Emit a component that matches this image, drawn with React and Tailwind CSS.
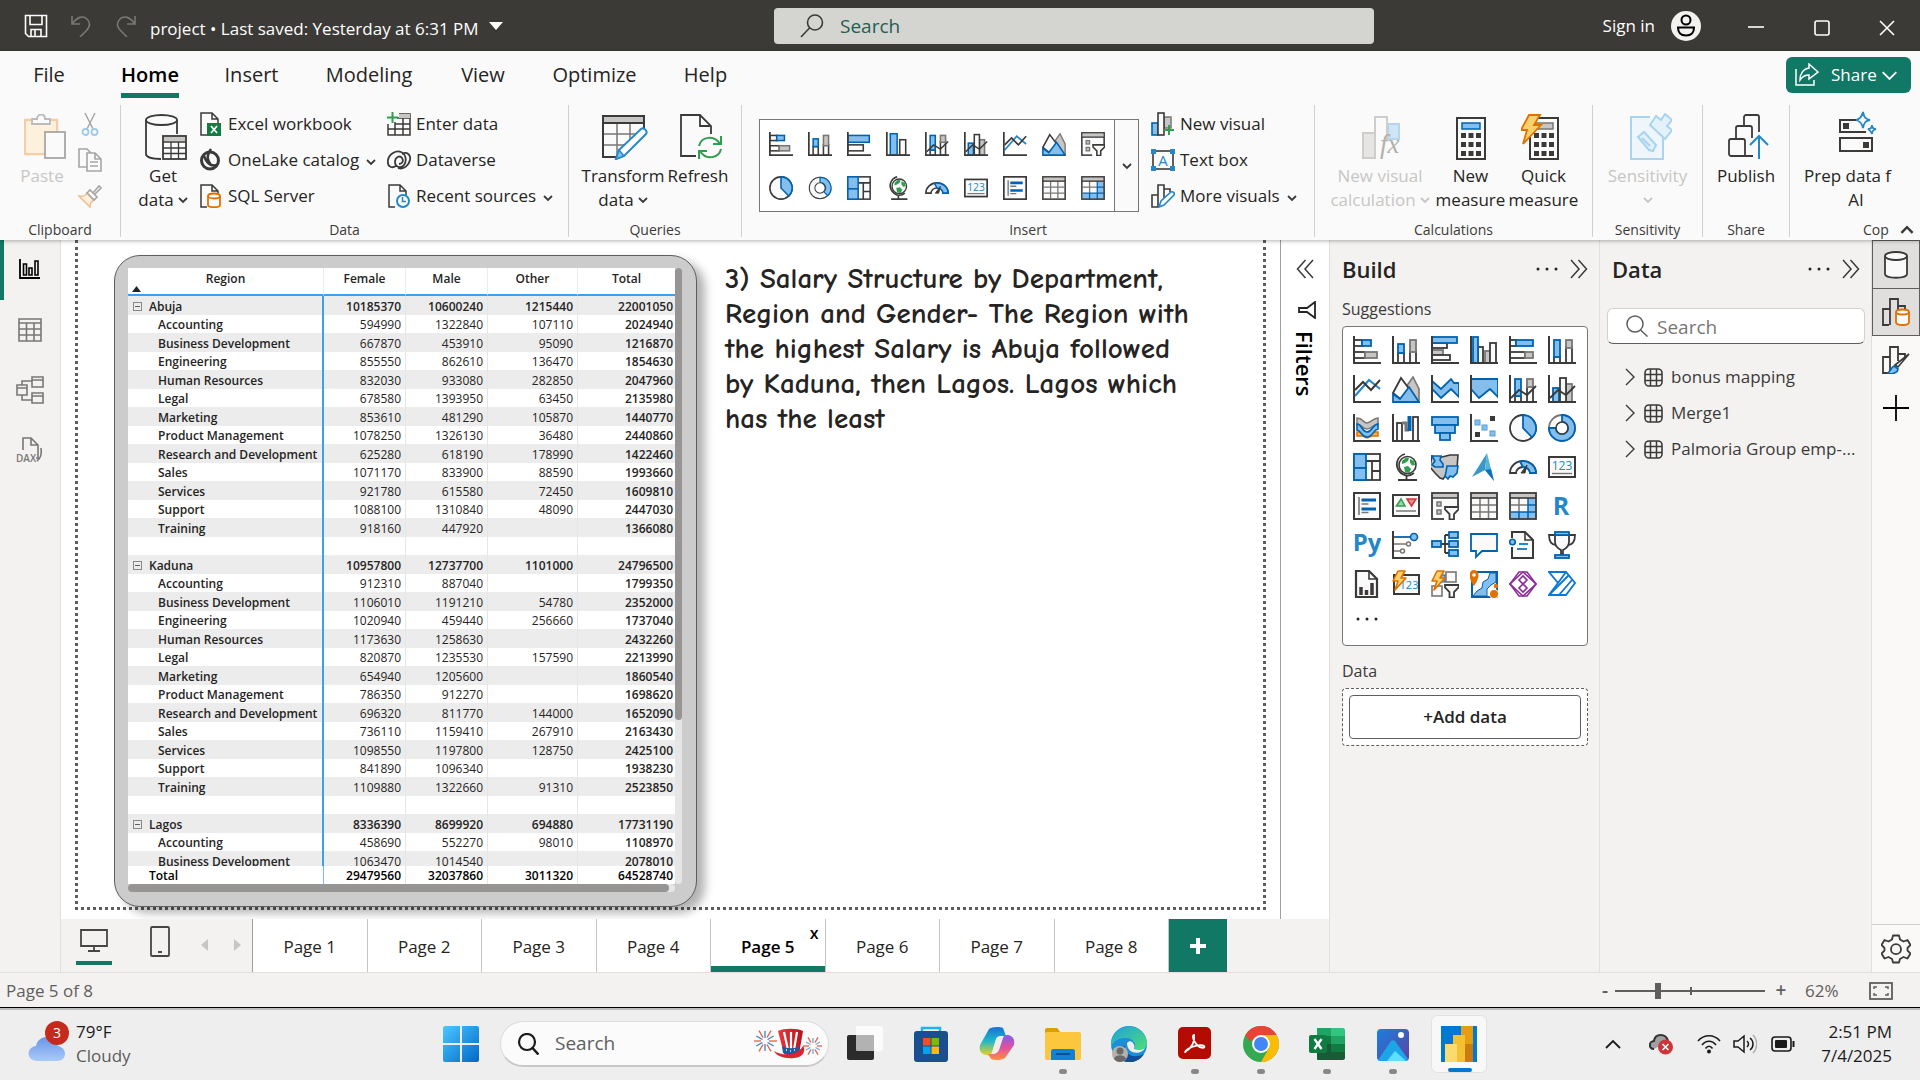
import React from "react";

const INK = "#3b3a39";
const BLUE = "#83beec";
const BLUE_EDGE = "#0063b1";
const GRAY = "#c8c6c4";
const GRAY_EDGE = "#797775";
const PAPER = "#fafafa";
const GREEN = "#2f9e4f";

/* ---------- small drawing helpers ---------- */

function Svg({ s = 28, w, h, vb = "0 0 28 28", children }) {
  return (
    <svg width={w || s} height={h || s} viewBox={vb} fill="none" aria-hidden="true" className="block shrink-0">
      {children}
    </svg>
  );
}

function R({ x, y, w, h, c = "w" }) {
  const fill = { w: PAPER, b: BLUE, g: GRAY }[c];
  const stroke = { w: INK, b: BLUE_EDGE, g: GRAY_EDGE }[c];
  return <rect x={x} y={y} width={w} height={h} fill={fill} stroke={stroke} strokeWidth="1.8" />;
}

const Axis = () => <path d="M1 0V27H28" stroke={INK} strokeWidth="2" />;

const Bolt = () => (
  <path d="M6 1h7l-4 7h5L3 20l3-9H1z" fill="#fcd06a" stroke="#e07000" strokeWidth="1.6" strokeLinejoin="round" />
);

const Funnel = () => (
  <path d="M14 15h13.5v2.5L23 22v5.5h-4.500V22L14 17.500z" fill={PAPER} stroke={INK} strokeWidth="1.8" />
);

const Globe = () => (
  <>
    <circle cx="15.500" cy="12" r="8.500" fill={PAPER} stroke={INK} strokeWidth="1.6" />
    <path d="M10 8l4-3.500 3 .5-1 3-3 2-3 1zM18 6l4 2 1 4-3 .5-2-3zM12 14l4-1 3 3-2 4-4-1z" fill={GREEN} />
    <path d="M13 1C6 3 3 10 6 16s10 9 16 4M14.500 23v3.500M6 27h19" stroke={INK} strokeWidth="1.8" />
  </>
);

/* ---------- visual type icons ---------- */

const V = {
  stackedBar: (<><R x={1} y={4} w={8} h={6} /><R x={9} y={4} w={9} h={6} c="b" /><R x={1} y={16} w={11} h={6} /><R x={12} y={16} w={12} h={6} c="g" /><Axis /></>),
  stackedCol: (<><R x={6} y={17} w={6} h={10} /><R x={6} y={8} w={6} h={9} c="b" /><R x={18} y={15} w={6} h={12} /><R x={18} y={4} w={6} h={12} c="g" /><Axis /></>),
  clusterBar: (<><R x={1} y={7} w={15} h={5} /><R x={1} y={14} w={11} h={5} c="g" /><R x={1} y={19} w={18} h={5} /><R x={1} y={1} w={25} h={6} c="b" /><Axis /></>),
  clusterCol: (<><R x={8} y={11} w={5} h={16} /><R x={15} y={15} w={5} h={12} c="g" /><R x={20} y={7} w={6} h={20} /><R x={3} y={1} w={5} h={26} c="b" /><Axis /></>),
  bar2: (<><R x={1} y={4} w={25} h={8} c="b" /><R x={1} y={15} w={18} h={7} /><Axis /></>),
  col2: (<><R x={5} y={2} w={8} h={25} c="b" /><R x={16} y={9} w={7} h={18} /><Axis /></>),
  fullBar: (<><R x={1} y={4} w={6} h={6} /><R x={7} y={4} w={17} h={6} c="b" /><R x={1} y={16} w={15} h={6} /><R x={16} y={16} w={8} h={6} c="g" /><Axis /></>),
  fullCol: (<><R x={6} y={21} w={6} h={6} /><R x={6} y={4} w={6} h={17} c="b" /><R x={18} y={11} w={6} h={16} /><R x={18} y={4} w={6} h={8} c="g" /><Axis /></>),
  line: (<><path d="M2 21L16 5l11 9" stroke="#2488c8" strokeWidth="2" /><path d="M2 15l8-8 8 8L27 5" stroke={INK} strokeWidth="2" /><Axis /></>),
  area: (<><path d="M14 12L21 2l6 12v13z" fill={GRAY} stroke={GRAY_EDGE} strokeWidth="1.6" /><path d="M1 18L9 3l9 12L12 27z" fill={PAPER} stroke={INK} strokeWidth="1.8" /><path d="M1 27V19l7 5 9-12 10 15z" fill={BLUE} stroke={BLUE_EDGE} strokeWidth="1.800" /></>),
  stackArea: (<><path d="M1 6l9 8L20 4l3 4h5v14l-8-8-10 9-9-9z" fill={BLUE} stroke={BLUE_EDGE} strokeWidth="1.8" /><Axis /></>),
  fullArea: (<><path d="M1 4h27v18l-8-8-11 9-8-9z" fill={BLUE} stroke={BLUE_EDGE} strokeWidth="1.8" /><Axis /></>),
  lineStack: (<><R x={6} y={21} w={6} h={6} /><R x={6} y={4} w={6} h={17} c="b" /><R x={18} y={11} w={6} h={16} /><R x={18} y={4} w={6} h={8} c="g" /><path d="M2 23l8-8 8 5 9-9" stroke={INK} strokeWidth="1.8" /><Axis /></>),
  lineCluster: (<><R x={5} y={13} w={6} h={14} c="b" /><R x={18} y={9} w={6} h={18} c="g" /><R x={12} y={3} w={6} h={24} /><path d="M2 23l8-8 8 5 9-9" stroke={INK} strokeWidth="1.8" /><Axis /></>),
  ribbon: (<><path d="M4 18h7l3 3 5-3h6v4h-6l-5 2-4-2H4z" fill="#fcb045" stroke="#e07000" strokeWidth="1.500" /><path d="M4 4c6 0 6 5 10 5s6-5 11-5v6c-5 0-6 5-11 5S9 10 4 10z" fill={GRAY} stroke={GRAY_EDGE} strokeWidth="1.500" /><path d="M4 10c5 0 5 8 10 8s5-7 11-8v5c-5 1-5 8-11 8S9 17 4 16z" fill={BLUE} stroke={BLUE_EDGE} strokeWidth="1.6" /><Axis /></>),
  waterfall: (<><R x={5} y={9} w={5} h={18} /><path d="M10 9h4v7h3" stroke={GRAY_EDGE} strokeWidth="3" /><path d="M17.500 2v15" stroke={BLUE_EDGE} strokeWidth="4" /><R x={21} y={3} w={5} h={24} /><Axis /></>),
  funnel: (<><R x={1} y={3} w={26} h={8} c="b" /><R x={4} y={11} w={20} h={8} c="b" /><R x={9} y={19} w={10} h={7} c="b" /></>),
  scatter: (<><Axis /><rect x="20" y="2" width="5" height="5" fill={INK} /><rect x="5" y="6" width="5" height="5" fill={BLUE} stroke="#5a9fd4" /><rect x="12" y="11" width="5" height="5" fill={BLUE} stroke="#5a9fd4" /><rect x="5" y="18" width="5" height="5" fill={INK} /><rect x="20" y="17" width="5" height="5" fill={BLUE} stroke="#5a9fd4" /></>),
  pie: (<><circle cx="14" cy="14" r="13" fill={PAPER} stroke={INK} strokeWidth="1.800" /><path d="M14 1a13 13 0 0 1 9 22.300L14 14z" fill={BLUE} stroke={BLUE_EDGE} strokeWidth="1.800" /></>),
  donut: (<><circle cx="14" cy="14" r="13" fill={PAPER} stroke={GRAY_EDGE} strokeWidth="1.8" /><path d="M14 1A13 13 0 1 1 1 14H8A6 6 0 1 0 14 8z" fill={BLUE} stroke={BLUE_EDGE} strokeWidth="1.800" /><circle cx="14" cy="14" r="6" fill="#fff" stroke={INK} strokeWidth="1.6" /></>),
  donutThin: (<><circle cx="14" cy="14" r="12.500" fill={PAPER} stroke={INK} strokeWidth="1.200" /><path d="M14 1.500A12.500 12.500 0 0 1 23 23L18.500 18.500A6 6 0 0 0 14 8z" fill={BLUE} stroke={BLUE_EDGE} strokeWidth="1.400" /><circle cx="14" cy="14" r="6" fill="#fff" stroke={INK} strokeWidth="1.200" /></>),
  treemap: (<><rect x="1" y="1" width="26" height="26" fill={PAPER} stroke={INK} strokeWidth="1.800" /><path d="M13 8h14M19 8v19M19 18h8" stroke={INK} strokeWidth="1.8" /><R x={1} y={1} w={12} h={14} c="b" /><R x={1} y={15} w={12} h={12} c="b" /></>),
  globe: <Globe />,
  map: (<><path d="M1 3l3 1h7l8-2h8l-1 13-3 6-5 3-3-2-3 4-3-1-5-5-5-6z" fill={GRAY} stroke={INK} strokeWidth="1.600" /><path d="M1 3h9l-1 4 3 4v3H4L1 12l3-4z" fill={BLUE} stroke={BLUE_EDGE} strokeWidth="1.600" /><path d="M16 13h11l-1 7-4 4-3-1-2 3-3-3 1-4z" fill={BLUE} stroke={BLUE_EDGE} strokeWidth="1.600" /></>),
  azure: (<><path d="M17 0L2 24l13-7z" fill="#3a98c8" /><path d="M17 0l7 28-9-11z" fill="#55b4dc" /><path d="M15 17l9 11-3-12z" fill="#0a70c0" /></>),
  gauge: (<><path d="M1 20a13 12 0 0 1 26 0h-6a7 6 0 0 0-14 0z" fill={PAPER} stroke={INK} strokeWidth="1.800" /><path d="M11 8.500a13 12 0 0 1 16 11.500h-6a7 6 0 0 0-7-6z" fill={BLUE} stroke={BLUE_EDGE} strokeWidth="1.800" /><path d="M12 20l6-8-2 8z" fill={INK} stroke={INK} /></>),
  card: (<><rect x="1" y="4" width="26" height="20" fill={PAPER} stroke={INK} strokeWidth="2" /><text x="14" y="17" textAnchor="middle" fontSize="12" fontFamily="Open Sans" fill="#2488c8">123</text><path d="M4 20.500h20" stroke={GRAY_EDGE} strokeWidth="1.400" /></>),
  multiCard: (<><rect x="1" y="1" width="26" height="26" fill={PAPER} stroke={INK} strokeWidth="2" /><path d="M6 5v18" stroke={GRAY_EDGE} strokeWidth="1.600" /><path d="M8.500 8H23M8.500 17H23" stroke={BLUE_EDGE} strokeWidth="3" /><path d="M8.500 12h7M8.500 20.500h7" stroke={GRAY_EDGE} strokeWidth="1.600" /></>),
  kpi: (<><rect x="1" y="3" width="26" height="21" fill={PAPER} stroke={INK} strokeWidth="2" /><path d="M4.500 14L9 7l4 7z" fill="#9bd6a8" stroke={GREEN} strokeWidth="1.500" /><path d="M15 7h9l-4.500 7z" fill="#f08a8a" stroke="#d13438" strokeWidth="1.500" /><path d="M4 19h20" stroke={GRAY_EDGE} strokeWidth="1.500" /></>),
  slicer: (<><rect x="1" y="1" width="26" height="26" fill={PAPER} stroke={INK} strokeWidth="1.800" /><rect x="2" y="2" width="24" height="4" fill={GRAY} /><path d="M1 6h26" stroke={INK} strokeWidth="1.500" /><rect x="6" y="10" width="4" height="4" stroke={GRAY_EDGE} fill={GRAY} strokeWidth="1.500" /><rect x="6" y="18" width="4" height="4" stroke={GRAY_EDGE} fill={GRAY} strokeWidth="1.500" /><rect x="13" y="18" width="15" height="10" fill="#fff" /><Funnel /></>),
  table: (<><rect x="1" y="1" width="26" height="26" fill={PAPER} /><path d="M10 6v20M18.500 6v20M2 13h24M2 20h24" stroke={GRAY_EDGE} strokeWidth="1.500" /><rect x="2" y="2" width="24" height="4" fill={GRAY} /><path d="M1 6h26" stroke={INK} strokeWidth="1.600" /><rect x="1" y="1" width="26" height="26" stroke={INK} strokeWidth="1.800" /></>),
  matrix: (<><rect x="1" y="1" width="26" height="26" fill={PAPER} /><path d="M19 6v14H2v7h25V6z" fill={BLUE} /><path d="M10 6v14M2 13h17" stroke={GRAY_EDGE} strokeWidth="1.500" /><path d="M10 20v7M19 6v21M19 13h8M2 20h25" stroke={BLUE_EDGE} strokeWidth="1.500" /><rect x="2" y="2" width="24" height="4" fill={GRAY} /><path d="M1 6h26" stroke={INK} strokeWidth="1.600" /><rect x="1" y="1" width="26" height="26" stroke={INK} strokeWidth="1.800" /></>),
  r: <text x="13" y="23" textAnchor="middle" fontSize="25" fontWeight="700" fontFamily="Open Sans" fill="#2488c8">R</text>,
  py: <text x="14" y="20" textAnchor="middle" fontSize="24" fontWeight="700" fontFamily="Open Sans" fill="#2488c8">Py</text>,
  keyInf: (<><Axis /><path d="M2 6h17" stroke={BLUE_EDGE} strokeWidth="1.800" /><circle cx="22" cy="6" r="3.500" fill={BLUE} stroke={BLUE_EDGE} strokeWidth="1.600" /><path d="M2 13h12M2 20h6" stroke={GRAY_EDGE} strokeWidth="1.600" /><circle cx="16.500" cy="13" r="2" stroke={GRAY_EDGE} strokeWidth="1.500" /><circle cx="10.500" cy="20" r="2" stroke={GRAY_EDGE} strokeWidth="1.500" /></>),
  decomp: (<><path d="M10 13h8M14 4v18M14 4h4M14 22h4" stroke={INK} strokeWidth="1.800" /><R x={1} y={10} w={9} h={6} c="b" /><R x={18} y={1} w={9} h={6} c="b" /><R x={18} y={10} w={9} h={6} c="b" /><R x={18} y={19} w={9} h={6} c="b" /></>),
  qna: <path d="M1 3h26v17H12l-6 6v-6H1z" fill={PAPER} stroke={BLUE_EDGE} strokeWidth="1.800" />,
  narrative: (<><path d="M3 1h13l8 8v18H3z" fill={PAPER} stroke={INK} strokeWidth="2" /><path d="M16 1v8h8" stroke={INK} strokeWidth="1.600" /><path d="M10 13h9M8 18h10" stroke="#2488c8" strokeWidth="1.800" /><rect x="0" y="7" width="8" height="9" fill="#fff" /><circle cx="3.500" cy="11" r="2.800" fill={BLUE} stroke={BLUE_EDGE} strokeWidth="1.600" /></>),
  trophy: (<><path d="M7 4H1c0 7 3 10 7 10M21 4h6c0 7-3 10-7 10" stroke={INK} strokeWidth="1.800" /><path d="M7 4v7c0 5 4 7 6 8v4h2v-4c2-1 6-3 6-8V4z" fill={PAPER} stroke={INK} strokeWidth="1.800" /><R x={7} y={1} w={14} h={3} c="b" /><R x={7} y={24} w={14} h={3} c="b" /></>),
  paginated: (<><path d="M3 1h13l8 8v18H3z" fill={PAPER} stroke={INK} strokeWidth="2.200" /><path d="M16 1v8h8" stroke={INK} strokeWidth="1.600" /><path d="M8 25v-8M13.500 25v-5M19 25V13" stroke={INK} strokeWidth="3.500" /></>),
  cardNew: (<><rect x="2" y="5" width="25" height="19" fill={PAPER} stroke={INK} strokeWidth="2" /><text x="17" y="19" textAnchor="middle" fontSize="11" fontFamily="Open Sans" fill="#2488c8">123</text><Bolt /></>),
  slicerNew: (<><rect x="8" y="5" width="6" height="7" fill={BLUE} stroke={BLUE_EDGE} /><rect x="15" y="2" width="10" height="10" fill={PAPER} stroke={GRAY_EDGE} strokeWidth="1.600" /><rect x="1" y="16" width="10" height="10" fill={PAPER} stroke={GRAY_EDGE} strokeWidth="1.600" /><Bolt /><Funnel /></>),
  arcgis: (<><rect x="2" y="2" width="25" height="25" fill={PAPER} stroke={BLUE_EDGE} strokeWidth="2" /><path d="M20 3l-2 6-5 3-1 6-5 3-4 5h14v-7l4-4 5-3V3z" fill={BLUE} stroke={BLUE_EDGE} strokeWidth="1" /><path d="M4 0a4.500 5 0 0 1 4.500 5C8.500 10 4 16 4 16S-.500 10-.500 5A4.500 5 0 0 1 4 0z" fill="#e07000" /><circle cx="4" cy="5" r="1.800" fill="#fff" /><circle cx="24" cy="24" r="5" fill="#fff" /><circle cx="24" cy="24" r="4" fill="#e07000" /><circle cx="26" cy="16" r="2.300" fill="#e07000" /></>),
  powerApps: (<g stroke="#8e2c9c" strokeWidth="1.600"><path d="M10 2h4l13 12-9 12h-4L1 14z" /><path d="M10 26h4l13-12L18 2h-4L1 14zM10 10l4-4 4 4-8 8 4 4 4-4z" /></g>),
  automate: (<g stroke="#0a78d4" strokeWidth="1.800"><path d="M1 2h17l9 11-9 12H1l9-12z" /><path d="M10 13L18 2M2 24L21 5M11 25L24 10" /></g>),
};

const GALLERY = ["stackedBar", "stackedCol", "bar2", "col2", "lineStack", "lineCluster", "line", "area", "slicer", "pie", "donutThin", "treemap", "globe", "gauge", "card", "multiCard", "table", "matrix"];
const SUGGESTED = ["stackedBar", "stackedCol", "clusterBar", "clusterCol", "fullBar", "fullCol", "line", "area", "stackArea", "fullArea", "lineStack", "lineCluster", "ribbon", "waterfall", "funnel", "scatter", "pie", "donut", "treemap", "globe", "map", "azure", "gauge", "card", "multiCard", "kpi", "slicer", "table", "matrix", "r", "py", "keyInf", "decomp", "qna", "narrative", "trophy", "paginated", "cardNew", "slicerNew", "arcgis", "powerApps", "automate"];

/* ---------- shared bits ---------- */

const Chevron = ({ c = INK, s = 10, sw = 1.8 }) => (
  <svg width={s} height={s} viewBox="0 0 10 10" fill="none" className="inline-block" aria-hidden="true">
    <path d="M1 3l4 4 4-4" stroke={c} strokeWidth={sw} />
  </svg>
);

const DoubleChevron = ({ flip }) => (
  <svg width="20" height="20" viewBox="0 0 20 20" fill="none" aria-hidden="true" className={flip ? "rotate-180" : ""}>
    <path d="M2 1l8 9-8 9M9.500 1l8 9-8 9" stroke={INK} strokeWidth="1.500" />
  </svg>
);

const Dots = () => (
  <svg width="24" height="6" viewBox="0 0 24 6" aria-hidden="true">
    <circle cx="3" cy="3" r="1.500" fill="#252423" /><circle cx="12" cy="3" r="1.500" fill="#252423" /><circle cx="21" cy="3" r="1.500" fill="#252423" />
  </svg>
);

function Group({ label, className, labelClass = "text-center", children }) {
  return (
    <section aria-label={label} className={"flex h-[132px] shrink-0 flex-col justify-between " + className}>
      <div className="flex">{children}</div>
      <div className={"text-sm leading-[15px] whitespace-nowrap text-[#3b3a39] " + labelClass}>{label}</div>
    </section>
  );
}

function Big({ icon, iconClass = "", lines, chevron, className, disabled, firstClass = "" }) {
  return (
    <button disabled={disabled} className={"flex shrink-0 flex-col items-center pt-2 text-[17px] leading-6 whitespace-nowrap " + (disabled ? "text-[#c8c6c4] " : "text-[#252423] ") + className}>
      <span className={"mb-[3px] flex h-12 items-center justify-center " + iconClass}>{icon}</span>
      {lines.map((l, i) => (
        <span key={l} className={"flex h-6 items-center gap-1 " + (i === 0 ? firstClass : "")}>
          {l}
          {chevron && i === lines.length - 1 ? <Chevron c={disabled ? "#c8c6c4" : INK} /> : null}
        </span>
      ))}
    </button>
  );
}

function Small({ icon, label, chevron }) {
  return (
    <button className="flex h-9 items-center gap-[5px] text-[17px] whitespace-nowrap text-[#252423]">
      <span className="flex w-6 justify-center">{icon}</span>
      {label}
      {chevron ? <span className="mt-1 ml-0.5 flex"><Chevron /></span> : null}
    </button>
  );
}

const Doc = ({ children }) => (
  <Svg s={24} vb="0 0 24 24"><path d="M8 23H2V1h11l6 6v4M13 1v6h6" fill="none" stroke={INK} strokeWidth="1.5" />{children}</Svg>
);

/* ---------- title bar ---------- */

function TitleBar() {
  return (
    <header className="flex h-[51px] shrink-0 items-center bg-[#3b3a37] text-[17px] text-white">
      <div className="flex w-[774px] items-center">
        <button aria-label="Save" className="ml-6 w-[46px]">
          <Svg s={24} vb="0 0 24 24"><path d="M1.500 1.500h21v21h-18l-3-3zM6 1.500v9h12v-9M7 22.500v-7h10v7M11 16v6" stroke="#fff" strokeWidth="1.600" /></Svg>
        </button>
        <button aria-label="Undo" className="w-[45px]">
          <Svg s={22} vb="0 0 22 22"><path d="M2 1v8h8M2 9C7 2 13 0 17 4s3 8-1 12l-6 6" stroke="#797775" strokeWidth="1.600" /></Svg>
        </button>
        <button aria-label="Redo" className="w-[35px]">
          <Svg s={22} vb="0 0 22 22"><path d="M20 1v8h-8M20 9C15 2 9 0 5 4s-3 8 1 12l6 6" stroke="#797775" strokeWidth="1.600" /></Svg>
        </button>
        <button className="mt-1.5 flex items-center gap-2.5 whitespace-nowrap">
          <span>project • Last saved: Yesterday at 6:31 PM</span>
          <span className="mb-1.5"><Svg w={14} h={8} vb="0 0 14 8"><path d="M0 0h14L7 8z" fill="#fff" /></Svg></span>
        </button>
      </div>
      <label className="flex h-9 w-[600px] items-center rounded-sm bg-[#d4d4d1] pl-[26px]">
        <Svg s={24} vb="0 0 24 24"><circle cx="15" cy="8.500" r="7.500" stroke={INK} strokeWidth="1.600" /><path d="M9.500 14L1 23" stroke={INK} strokeWidth="1.600" /></Svg>
        <input type="search" aria-label="Search" placeholder="Search" className="ml-4 mt-0.5 min-w-0 flex-1 bg-transparent text-[19px] outline-none placeholder:text-[#1f5e52]" />
      </label>
      <div className="ml-auto flex items-center">
        <button className="flex items-center gap-4 whitespace-nowrap">
          Sign in
          <Svg s={30} vb="0 0 30 30"><circle cx="15" cy="15" r="15" fill="#f3f2f1" /><circle cx="15" cy="9" r="4.500" stroke="#000" strokeWidth="2" /><path d="M7 16.500h16c0 5-3 8-8 8s-8-3-8-8z" stroke="#000" strokeWidth="2" /></Svg>
        </button>
        <button aria-label="Minimize" className="ml-[47px]"><Svg s={16} vb="0 0 16 16"><path d="M0 9h16" stroke="#fff" strokeWidth="1.600" /></Svg></button>
        <button aria-label="Maximize" className="mt-1 ml-[50px]"><Svg s={16} vb="0 0 16 16"><rect x="1" y="1" width="14" height="14" rx="2" stroke="#fff" strokeWidth="1.600" /></Svg></button>
        <button aria-label="Close" className="mt-1 mr-[25px] ml-[49px]"><Svg s={16} vb="0 0 16 16"><path d="M1 1l14 14M15 1L1 15" stroke="#fff" strokeWidth="1.600" /></Svg></button>
      </div>
    </header>
  );
}

/* ---------- ribbon ---------- */

const MENU = [
  ["File", "w-[98px]"], ["Home", "w-[104px]"], ["Insert", "w-[99px]"], ["Modeling", "w-[136px]"],
  ["View", "w-[92px]"], ["Optimize", "w-[131px]"], ["Help", "w-[91px]"],
];

function Menu() {
  return (
    <nav className="flex h-[54px] text-xl text-[#252423]">
      {MENU.map(([m, w]) => (
        <button key={m} className={"flex items-start justify-center pt-2 " + w}>
          <span className={m === "Home" ? "border-b-5 border-[#117865] pb-0.5 leading-8 font-semibold text-black" : "leading-8"}>{m}</span>
        </button>
      ))}
      <button className="mt-1.5 mr-[9px] ml-auto flex h-9 w-[125px] items-center rounded-md bg-[#117865] pl-[9px] text-[17px] text-white">
        <Svg s={24} vb="0 0 24 24"><path d="M1 6v16h18v-5M14 1l9 8-9 7v-4c-5 0-7 2-9 5 0-6 3-11 9-12z" stroke="#fff" strokeWidth="1.500" /></Svg>
        <span className="mr-1 ml-3">Share</span>
        <Chevron c="#fff" s={17} sw={1.1} />
      </button>
    </nav>
  );
}

const CalcIcon = ({ bolt }) => (
  <Svg w={38} h={46} vb="0 0 38 46">
    <rect x={bolt ? 9 : 5} y="4" width="28" height="41" fill={PAPER} stroke={INK} strokeWidth="2" />
    <g transform={bolt ? "translate(4 0)" : ""}>
      <rect x="10" y="9" width="18" height="6" fill={bolt ? GRAY : BLUE} stroke={bolt ? GRAY_EDGE : BLUE_EDGE} strokeWidth="1.500" />
      {[19, 28, 37].map((y) => [9, 16.500, 24].map((x) => <rect key={x + "-" + y} x={x} y={y} width="5" height="5" fill={INK} />))}
    </g>
    {bolt ? <path d="M8 1h11l-6 10h7L2 30l4-14H0z" fill="#fcd06a" stroke="#e07000" strokeWidth="1.800" /> : null}
  </Svg>
);

function Ribbon() {
  return (
    <div className="relative z-10 shrink-0 bg-[#fafafa] shadow-[0_1px_4px_rgba(0,0,0,0.3)]">
      <Menu />
      <div className="flex pb-[3px]">
        <Group label="Clipboard" className="w-[121px] border-r border-[#d2d0ce]">
          <Big disabled className="ml-[10px] w-16" iconClass="pl-1.5" lines={["Paste"]} icon={
            <Svg w={42} h={46} vb="0 0 42 46"><path d="M8 6H1v34h20M26 6h7v13" stroke="#f3cfa2" strokeWidth="2.500" /><path d="M3 8h28v12H21v18H3z" fill="#fdf0dc" /><path d="M8 10V5h5c0-6 8-6 8 0h5v5z" fill={PAPER} stroke="#bdbbb9" strokeWidth="1.800" /><rect x="21" y="18" width="20" height="26" fill={PAPER} stroke="#a8a6a4" strokeWidth="1.800" /></Svg>
          } />
          <div className="mt-px ml-1 flex flex-col">
            <button disabled aria-label="Cut" className="flex h-9 items-center"><Svg s={24} vb="0 0 24 24"><path d="M7 1l8 16M17 1L9 17" stroke="#a8a6a4" strokeWidth="1.500" /><circle cx="7.500" cy="20" r="3" stroke="#9fcbe8" strokeWidth="1.800" /><circle cx="16.500" cy="20" r="3" stroke="#9fcbe8" strokeWidth="1.800" /></Svg></button>
            <button disabled aria-label="Copy" className="flex h-9 items-center"><Svg s={24} vb="0 0 24 24"><path d="M9 19H1V1h8l4 4M9 5h8l6 6v12H9zM17 5v6h6M12 14h8M12 18h8" stroke="#a8a6a4" strokeWidth="1.600" /></Svg></button>
            <button disabled aria-label="Format painter" className="flex h-9 items-center"><Svg s={24} vb="0 0 24 24"><path d="M1 12c4 1 7-1 8-3l7 7c-2 1-4 4-4 7z" fill="#fdf0dc" stroke="#f0c090" strokeWidth="1.600" /><path d="M9 9l3-3 7 7-3 3zM15 9l6-7 2 2-6 6" stroke="#a8a6a4" strokeWidth="1.600" /></Svg></button>
          </div>
        </Group>

        <Group label="Data" className="w-[448px] border-r border-[#d2d0ce]">
          <Big className="ml-[10px] w-16" iconClass="pl-1.5" lines={["Get", "data"]} chevron icon={
            <Svg w={42} h={46} vb="0 0 42 46"><path d="M1 6v34c0 3 6 5 15 5M32 6v14" stroke={INK} strokeWidth="1.800" /><ellipse cx="16.500" cy="6" rx="15.500" ry="5" stroke={INK} strokeWidth="1.800" /><rect x="18" y="22" width="23" height="23" fill={PAPER} stroke={INK} strokeWidth="1.800" /><path d="M19 23h21v4H19z" fill={GRAY} /><path d="M18 28h23M18 34h23M18 39.500h23M26 28v17M33.500 28v17" stroke={INK} strokeWidth="1.300" /></Svg>
          } />
          <div className="mt-px ml-1 flex w-[190px] flex-col">
            <Small label="Excel workbook" icon={<Doc><rect x="8" y="11" width="14" height="13" fill="#107c41" /><path d="M12 14l6 7M18 14l-6 7" stroke="#fff" strokeWidth="1.800" /></Doc>} />
            <Small label="OneLake catalog" chevron icon={<Svg s={24} vb="0 0 24 24"><circle cx="11" cy="12.500" r="8.500" stroke={INK} strokeWidth="3" /><path d="M12 1C8 7 7 11 13 18M5 8c3 8 7 11 13 9" stroke={INK} strokeWidth="2.500" /></Svg>} />
            <Small label="SQL Server" icon={<Doc><path d="M9 12v9c0 3 12 3 12 0v-9" fill={PAPER} stroke="#e07000" strokeWidth="1.800" /><ellipse cx="15" cy="12" rx="6" ry="2.500" fill={PAPER} stroke="#e07000" strokeWidth="1.800" /></Doc>} />
          </div>
          <div className="mt-px -ml-0.5 flex flex-col">
            <Small label="Enter data" icon={<Svg s={24} vb="0 0 24 24"><path d="M12 2h11v21H1V12M1 17h22M10 6h13M8 12h15M8 10v13M16 6v17" stroke={INK} strokeWidth="1.500" /><path d="M12 2h11v4H12z" fill={GRAY} /><path d="M5.500 0v11M0 5.500h11" stroke={GREEN} strokeWidth="2" /></Svg>} />
            <Small label="Dataverse" icon={<Svg s={24} vb="0 0 24 24"><path d="M9 18C4 21 0 18 1 12S9 2 14 4s6 9 3 13-9 2-9-3 5-7 7-4 0 6-3 6M15 6c5-3 9 1 8 6s-6 10-12 8" stroke={INK} strokeWidth="1.800" /></Svg>} />
            <Small label="Recent sources" chevron icon={<Doc><circle cx="16" cy="17" r="6" fill={PAPER} stroke="#2488c8" strokeWidth="2" /><path d="M15.500 13v4.500H19" stroke="#2488c8" strokeWidth="1.500" /></Doc>} />
          </div>
        </Group>

        <Group label="Queries" className="w-[173px] border-r border-[#d2d0ce]">
          <Big className="ml-[10px] w-[88px]" iconClass="pl-1" lines={["Transform", "data"]} chevron icon={
            <Svg w={46} h={46} vb="0 0 46 46"><rect x="1" y="2" width="41" height="41" fill={PAPER} /><path d="M2 3h39v6H2z" fill={GRAY} /><path d="M1 20h41M1 31h28M15 9v34M28 9v22" stroke={GRAY_EDGE} strokeWidth="1.500" /><path d="M15 43H1V2h41v16M1 9h41" stroke={INK} strokeWidth="2" /><path d="M14 45l3-9 22-21c3-2 7 2 5 5L22 42z" fill="#fff" stroke="#2488c8" strokeWidth="2" /><path d="M14 45l3-9 5 6z" fill={BLUE} stroke="#2488c8" strokeWidth="1.500" /></Svg>
          } />
          <Big className="w-[62px]" iconClass="pl-1.5" lines={["Refresh"]} icon={
            <Svg w={42} h={46} vb="0 0 42 46"><path d="M16 42H1V1h19l11 11v8M20 1v11h11" stroke={INK} strokeWidth="1.800" /><path d="M19 32c2-9 15-12 21-2M41 22v8h-8M41 35c-2 9-15 12-21 2M19 45v-8h8" stroke={GREEN} strokeWidth="2" /></Svg>
          } />
        </Group>

        <Group label="Insert" className="w-[573px] border-r border-[#d2d0ce]">
          <div className="mt-3.5 ml-[17px] flex h-[93px] w-[380px] border border-[#797775] bg-white">
            <div className="grid flex-1 grid-cols-9 content-center gap-y-5 px-0.5">
              {GALLERY.map((k) => (
                <button key={k} aria-label={k} className="flex justify-center"><Svg s={24}>{V[k]}</Svg></button>
              ))}
            </div>
            <button aria-label="More" className="flex w-6 items-center justify-center border-l border-[#797775] bg-[#fafafa]"><Chevron /></button>
          </div>
          <div className="mt-px ml-3 flex flex-col">
            <Small label="New visual" icon={<Svg s={24} vb="0 0 24 24"><rect x="1" y="11" width="6" height="12" fill={BLUE} stroke={BLUE_EDGE} strokeWidth="1.600" /><rect x="13" y="5" width="7" height="11" fill={GRAY} stroke={GRAY_EDGE} strokeWidth="1.500" /><rect x="7" y="1" width="6" height="22" fill={PAPER} stroke={INK} strokeWidth="1.600" /><path d="M18 13v10M13 18h10" stroke={GREEN} strokeWidth="2" /></Svg>} />
            <Small label="Text box" icon={<Svg s={24} vb="0 0 24 24"><rect x="2" y="3" width="20" height="18" stroke={INK} strokeWidth="1.600" /><g fill="#2488c8"><rect x="0" y="1" width="5" height="5" /><rect x="19" y="1" width="5" height="5" /><rect x="0" y="18" width="5" height="5" /><rect x="19" y="18" width="5" height="5" /></g><text x="12" y="18" textAnchor="middle" fontSize="15" fontFamily="Open Sans" fill="#2488c8">A</text></Svg>} />
            <Small label="More visuals" chevron icon={<Svg s={24} vb="0 0 24 24"><path d="M7 23H1V11h6M7 23V1h6v14M13 5h6v3" stroke={INK} strokeWidth="1.600" /><path d="M8 23l2-6L20 8c2-1 4 1 3 3l-10 10z" fill="#fff" stroke="#2488c8" strokeWidth="1.600" /></Svg>} />
          </div>
        </Group>

        <Group label="Calculations" className="w-[278px] border-r border-[#d2d0ce]">
          <Big disabled className="ml-[13px] w-[104px]" iconClass="pl-1.5" lines={["New visual", "calculation"]} chevron icon={
            <Svg w={42} h={46} vb="0 0 42 46"><rect x="1" y="19" width="12" height="25" fill="#e6e5e4" stroke="#cfcdcb" strokeWidth="2" /><rect x="26" y="10" width="11" height="15" fill="#cfe5f5" stroke="#b5d5ea" strokeWidth="2" /><path d="M13 44V3h12v24" stroke="#cfcdcb" strokeWidth="2" /><text x="18" y="39" fontSize="27" fontStyle="italic" fontFamily="Liberation Serif" fill="#b3b0ad">fx</text></Svg>
          } />
          <Big className="ml-0.5 w-[73px]" lines={["New", "measure"]} icon={<CalcIcon />} />
          <Big className="w-[73px]" iconClass="pr-2" lines={["Quick", "measure"]} icon={<CalcIcon bolt />} />
        </Group>

        <Group label="Sensitivity" className="w-[110px] border-r border-[#d2d0ce]">
          <Big disabled className="w-full" iconClass="pl-1.5" lines={["Sensitivity", ""]} chevron icon={
            <Svg w={42} h={48} vb="0 0 42 48"><path d="M20 4H1v42h32V24" fill="#eef6fb" stroke="#a9d3ee" strokeWidth="2" /><path d="M20 12l6-9 5 4 4-6 7 6-5 6 5 4-7 9zM8 24l6-5 12 13-3 6-4-1z" fill="#e3f1fa" stroke="#a9d3ee" strokeWidth="2" /><path d="M12 25l8 8" stroke="#a9d3ee" strokeWidth="2" /></Svg>
          } />
        </Group>

        <Group label="Share" className="w-[87px] border-r border-[#d2d0ce]">
          <Big className="w-full" iconClass="pl-1.5" lines={["Publish"]} icon={
            <Svg w={42} h={46} vb="0 0 42 46"><path d="M8 25V14c0-1 1-2 2-2h6M16 12V3c0-1 1-2 2-2h11c1 0 2 1 2 2v15M10 42H3c-1 0-2-1-2-2V27c0-1 1-2 2-2h12c1 0 2 1 2 2v15H9M24 24V14c0-1-1-2-2-2h-6M17 42h8" stroke={INK} strokeWidth="1.800" /><path d="M31 45V22M22 31l9-9 9 9" stroke="#2488c8" strokeWidth="2" /></Svg>
          } />
        </Group>

        <Group label="Cop" className="w-[100px]" labelClass="ml-[73px]">
          <Big className="ml-[14px] w-[104px]" firstClass="self-start" iconClass="pb-2 pl-1" lines={["Prep data f", "AI"]} icon={
            <Svg w={38} h={44} vb="0 0 38 44"><path d="M17 9H1v12h26M1 27h32v13H1z" stroke={INK} strokeWidth="2" /><rect x="4" y="12" width="6" height="6" fill={INK} /><rect x="24" y="31" width="6" height="6" fill={INK} /><path d="M24 1c1 6 3 7 7 8-5 1-6 3-7 8-1-5-3-7-7-8 4-1 6-3 7-8zM33 14c0 3 2 4 4 4-3 1-4 2-4 5-1-3-2-4-4-5 2 0 4-1 4-4z" fill={PAPER} stroke="#2488c8" strokeWidth="1.800" /></Svg>
          } />
        </Group>
        <button aria-label="Collapse ribbon" className="mt-auto ml-2.5 flex h-4 rotate-180"><Chevron s={14} /></button>
      </div>
    </div>
  );
}

/* ---------- report data ---------- */

const ROWS = [
  ["Abuja", 10185370, 10600240, 1215440, 22001050],
  [" Accounting", 594990, 1322840, 107110, 2024940],
  [" Business Development", 667870, 453910, 95090, 1216870],
  [" Engineering", 855550, 862610, 136470, 1854630],
  [" Human Resources", 832030, 933080, 282850, 2047960],
  [" Legal", 678580, 1393950, 63450, 2135980],
  [" Marketing", 853610, 481290, 105870, 1440770],
  [" Product Management", 1078250, 1326130, 36480, 2440860],
  [" Research and Development", 625280, 618190, 178990, 1422460],
  [" Sales", 1071170, 833900, 88590, 1993660],
  [" Services", 921780, 615580, 72450, 1609810],
  [" Support", 1088100, 1310840, 48090, 2447030],
  [" Training", 918160, 447920, "", 1366080],
  ["", "", "", "", ""],
  ["Kaduna", 10957800, 12737700, 1101000, 24796500],
  [" Accounting", 912310, 887040, "", 1799350],
  [" Business Development", 1106010, 1191210, 54780, 2352000],
  [" Engineering", 1020940, 459440, 256660, 1737040],
  [" Human Resources", 1173630, 1258630, "", 2432260],
  [" Legal", 820870, 1235530, 157590, 2213990],
  [" Marketing", 654940, 1205600, "", 1860540],
  [" Product Management", 786350, 912270, "", 1698620],
  [" Research and Development", 696320, 811770, 144000, 1652090],
  [" Sales", 736110, 1159410, 267910, 2163430],
  [" Services", 1098550, 1197800, 128750, 2425100],
  [" Support", 841890, 1096340, "", 1938230],
  [" Training", 1109880, 1322660, 91310, 2523850],
  ["", "", "", "", ""],
  ["Lagos", 8336390, 8699920, 694880, 17731190],
  [" Accounting", 458690, 552270, 98010, 1108970],
  [" Business Development", 1063470, 1014540, "", 2078010],
];

const Cols = () => (
  <colgroup>
    <col className="w-[196px]" /><col className="w-[82px]" /><col className="w-[82px]" /><col className="w-[90px]" /><col className="w-[97px]" />
  </colgroup>
);

function Matrix() {
  return (
    <div className="mt-[15px] ml-[36px] flex h-[652px] w-[583px] flex-col rounded-[26px] border border-[#605e5c] bg-[#cccccc] px-[13px] pt-3 shadow-[8px_6px_10px_rgba(0,0,0,0.3)]">
      <div className="flex">
        <div className="w-[547px] text-xs text-[#252423]">
          <div className="h-[598px] overflow-hidden bg-white">
            <table className="w-full table-fixed border-separate border-spacing-0">
              <Cols />
              <thead>
                <tr className="h-[28px]">
                  {["Region", "Female", "Male", "Other", "Total"].map((h, i) => (
                    <th key={h} scope="col" className={"relative border-b-2 border-b-[#419fe8] p-0 pb-1 text-center leading-4 font-semibold " + (i < 4 ? "border-r border-r-[#ececec]" : "")}>
                      {h}
                      {i === 0 ? <svg width="9" height="6" viewBox="0 0 9 6" className="absolute bottom-0.5 left-1" aria-hidden="true"><path d="M0 6h9L4.500 0z" fill="#252423" /></svg> : null}
                    </th>
                  ))}
                </tr>
              </thead>
              <tbody>
                {ROWS.map((r, i) => {
                  const head = r[0] !== "" && r[0][0] !== " ";
                  const shade = i % 14 % 2 === 0;
                  return (
                    <tr key={i} className={(i % 2 ? "h-[18px] " : "h-[19px] ") + (shade ? "bg-[#ececec]" : "bg-white")}>
                      <th scope="row" className="border-r-2 border-[#419fe8] p-0 pt-0.5 text-left leading-4 font-semibold whitespace-nowrap">
                        <span className={"flex items-center " + (head ? "pl-[5px]" : "pl-[30px]")}>
                          {head ? <svg width="9" height="9" viewBox="0 0 9 9" fill="none" className="mr-[7px]" aria-hidden="true"><rect x=".500" y=".500" width="8" height="8" stroke="#8a8886" /><path d="M2 4.500h5" stroke="#605e5c" /></svg> : null}
                          {r[0].trim()}
                        </span>
                      </th>
                      {r.slice(1).map((v, j) => (
                        <td key={j} className={"pt-0.5 pb-0 pl-0 text-right leading-4 " + (j < 3 ? "border-r border-[#e6e6e6] pr-1 " : "pr-0.5 ") + (head || j === 3 ? "font-semibold" : "")}>{v}</td>
                      ))}
                    </tr>
                  );
                })}
              </tbody>
            </table>
          </div>
          <table className="w-full table-fixed border-separate border-spacing-0 bg-white">
            <Cols />
            <tbody>
              <tr className="h-[18px] leading-4 font-semibold text-black">
                <th scope="row" className="border-r border-[#7ab8ee] p-0 pt-0.5 pl-[21px] text-left font-semibold">Total</th>
                <td className="border-r border-[#e6e6e6] p-0 pt-0.5 pr-1 text-right">29479560</td>
                <td className="border-r border-[#e6e6e6] p-0 pt-0.5 pr-1 text-right">32037860</td>
                <td className="border-r border-[#e6e6e6] p-0 pt-0.5 pr-1 text-right">3011320</td>
                <td className="p-0 pt-0.5 pr-0.5 text-right">64528740</td>
              </tr>
            </tbody>
          </table>
        </div>
        <div className="w-[7px] rounded bg-[#e6e6e6]"><div className="h-[452px] rounded bg-[#979593]" /></div>
      </div>
      <div className="h-2 w-[547px] rounded bg-[#e6e6e6]"><div className="h-2 w-[541px] rounded bg-[#979593]" /></div>
    </div>
  );
}

/* ---------- workspace ---------- */

const railBtn = "flex h-[60px] w-full items-center justify-center ";

function LeftRail() {
  return (
    <nav className="flex w-[61px] shrink-0 flex-col border-r border-[#e1dfdd] bg-[#f3f2f1]">
      <button aria-label="Report view" className={railBtn + "border-l-4 border-[#117865] pr-1"}>
        <Svg s={22} vb="0 0 22 22"><path d="M1 0v19h20" stroke="#000" strokeWidth="1.800" /><path d="M4.500 5h3v11h-3zM10 9h3v7h-3zM16 2h3v14h-3z" stroke="#000" strokeWidth="1.600" /></Svg>
      </button>
      <button aria-label="Table view" className={railBtn}><Svg s={24} vb="0 0 24 24"><path d="M1 1h22v22H1zM1 5h22M1 11h22M1 17h22M8.500 5v18M16 5v18" stroke="#797775" strokeWidth="1.600" /></Svg></button>
      <button aria-label="Model view" className={railBtn}><Svg s={28}><path d="M16 1h11v10H16zM16 4h11M1 9h10v10H1zM1 12h10M16 17h11v10H16zM16 20h11M6 9V5h10M6 19v5h10" stroke="#797775" strokeWidth="1.600" /></Svg></button>
      <button aria-label="DAX query view" className={railBtn}>
        <Svg s={28}><path d="M7 14V2h8l7 7v13h-2M15 2v7h7M25 12c1 6 0 10-4 13" stroke="#797775" strokeWidth="1.600" /><text x="0" y="26" fontSize="10" fontWeight="600" fontFamily="Open Sans" fill="#797775">DAX</text></Svg>
      </button>
    </nav>
  );
}

function PageTabs() {
  return (
    <div className="flex h-[53px] shrink-0 bg-[#f3f2f1] text-[17px] text-[#252423]">
      <div className="flex w-[192px] items-start border-r border-[#a19f9d] pl-[15px]">
        <button aria-label="Desktop layout" className="flex h-[46px] w-9 flex-col items-center justify-between border-b-4 border-[#117865] pt-2.5">
          <Svg w={30} h={24} vb="0 0 28 24"><path d="M1 1h26v16H1zM14 17v5M8 22h12" stroke="#484644" strokeWidth="1.800" /></Svg>
        </button>
        <button aria-label="Mobile layout" className="mt-[7px] ml-[38px]"><Svg w={20} h={31} vb="0 0 20 31"><rect x="1" y="1" width="18" height="29" rx="1" stroke="#484644" strokeWidth="1.800" /><path d="M8 26h4" stroke="#484644" strokeWidth="2" /></Svg></button>
        <button aria-label="Previous pages" className="mt-5 ml-[31px]"><Svg w={7} h={12} vb="0 0 7 12"><path d="M7 0v12L0 6z" fill="#c8c6c4" /></Svg></button>
        <button aria-label="Next pages" className="mt-5 ml-[26px]"><Svg w={7} h={12} vb="0 0 7 12"><path d="M0 0v12l7-6z" fill="#c8c6c4" /></Svg></button>
      </div>
      <div className="grid w-[916px] grid-cols-8">
        {[1, 2, 3, 4, 5, 6, 7, 8].map((n) => (
          <div key={n} className={"relative flex border-r border-[#c8c6c4] bg-white " + (n === 5 ? "font-semibold text-black" : "")}>
            <button className={"flex-1 pt-0.5 " + (n === 5 ? "border-b-6 border-[#117865] pt-2" : "")}>Page {n}</button>
            {n === 5 ? <button aria-label="Delete page" className="absolute top-1.5 right-1.5 text-base leading-4 font-semibold">x</button> : null}
          </div>
        ))}
      </div>
      <button aria-label="New page" className="flex w-[58px] items-center justify-center bg-[#117865]">
        <Svg s={16} vb="0 0 16 16"><path d="M8 0v16M0 8h16" stroke="#fff" strokeWidth="4" /></Svg>
      </button>
    </div>
  );
}

function Canvas() {
  return (
    <main className="flex min-w-0 flex-1 flex-col bg-white">
      <div className="flex flex-1">
        <div className="mr-[14px] mb-[9px] ml-[14px] flex flex-1 border-x-3 border-b-3 border-dotted border-[#605e5c]">
          <Matrix />
          <p className="mt-[21px] ml-[28px] text-[29px] leading-[35px] font-bold whitespace-nowrap text-[#252423] [font-family:'Comic_Sans_MS','Comic_Neue',Lato,sans-serif]">
            3) Salary Structure by Department,<br />
            Region and Gender- The Region with<br />
            the highest Salary is Abuja followed<br />
            by Kaduna, then Lagos. Lagos which<br />
            has the least
          </p>
        </div>
        <aside className="flex w-[49px] flex-col items-center border-l border-[#a19f9d] pt-[19px]">
          <button aria-label="Expand filters"><DoubleChevron flip /></button>
          <span className="mt-[22px] ml-1"><Svg s={18} vb="0 0 18 18"><path d="M17 1v16l-8-6H1V7h8z" stroke="#252423" strokeWidth="1.800" /></Svg></span>
          <span className="mt-3 text-[22px] leading-7 font-semibold text-black [writing-mode:vertical-rl]">Filters</span>
        </aside>
      </div>
      <PageTabs />
    </main>
  );
}

function PaneHead({ title }) {
  return (
    <div className="flex h-[58px] items-center pr-[10px] pl-3">
      <h2 className="mr-auto text-[22px] font-semibold text-[#252423]">{title}</h2>
      <button aria-label={title + " options"} className="mr-2.5 flex"><Dots /></button>
      <button aria-label={"Collapse " + title}><DoubleChevron /></button>
    </div>
  );
}

function BuildPane() {
  return (
    <aside className="flex w-[271px] shrink-0 flex-col border-x border-[#e1dfdd] bg-[#f3f2f1] text-[#252423]">
      <PaneHead title="Build" />
      <div className="pr-[11px] pl-3">
        <h3 className="text-base leading-[22px] text-[#3b3a39]">Suggestions</h3>
        <div className="mt-1.5 h-[320px] rounded-sm border border-[#797775] bg-white px-[10px] pt-[9px]">
          <div className="grid grid-cols-[repeat(6,28px)] gap-[11px]">
            {SUGGESTED.map((k) => (
              <button key={k} aria-label={k}><Svg>{V[k]}</Svg></button>
            ))}
          </div>
          <button aria-label="Get more visuals" className="mt-[18px] ml-0.5 flex"><Dots /></button>
        </div>
        <h3 className="mt-[13px] text-base leading-6 text-[#3b3a39]">Data</h3>
        <div className="mt-[5px] rounded-sm border border-dashed border-[#605e5c] bg-white p-1.5">
          <button className="h-11 w-full rounded-sm border border-[#605e5c] text-[17px] font-semibold text-[#252423]">+Add data</button>
        </div>
      </div>
    </aside>
  );
}

function DataPane() {
  return (
    <aside className="flex w-[272px] shrink-0 flex-col border-r border-[#e1dfdd] bg-[#f3f2f1] text-[#252423]">
      <PaneHead title="Data" />
      <label className="mt-2.5 mr-1.5 ml-[7px] flex h-9 items-center rounded-md border border-[#d2d0ce] border-b-[#605e5c] bg-white pl-[18px]">
        <Svg s={22} vb="0 0 22 22"><circle cx="9" cy="9" r="8" stroke="#605e5c" strokeWidth="1.500" /><path d="M14.500 15l7 6.500" stroke="#605e5c" strokeWidth="1.500" /></Svg>
        <input type="search" aria-label="Search fields" placeholder="Search" className="mt-0.5 ml-[9px] min-w-0 flex-1 bg-transparent text-[19px] outline-none placeholder:text-[#797775]" />
      </label>
      <ul className="mt-[15px]">
        {["bonus mapping", "Merge1", "Palmoria Group emp-..."].map((t) => (
          <li key={t}>
            <button className="flex h-9 items-center pl-[25px] text-[17px] whitespace-nowrap text-[#3b3a39]">
              <Svg w={10} h={18} vb="0 0 10 18"><path d="M1 1l8 8-8 8" stroke={INK} strokeWidth="1.400" /></Svg>
              <span className="mr-2 ml-[9px]"><Svg s={19} vb="0 0 19 19"><rect x="1" y="1" width="17" height="17" rx="4" stroke={INK} strokeWidth="1.600" /><path d="M6.500 1v17M12.500 1v17M1 6.500h17M1 12.500h17" stroke={INK} strokeWidth="1.500" /></Svg></span>
              {t}
            </button>
          </li>
        ))}
      </ul>
    </aside>
  );
}

function RightRail() {
  const bars = <path d="M7 27H1V11h7M8 27V1h8v14M16 8h7v3" stroke={INK} strokeWidth="1.800" />;
  return (
    <nav className="flex w-12 shrink-0 flex-col bg-[#faf9f8]">
      <button aria-label="Data" className="flex h-[49px] items-center justify-center border border-[#605e5c] bg-[#e1dfdd]">
        <Svg w={24} h={28} vb="0 0 24 28"><path d="M1 5v18c0 5 22 5 22 0V5" fill={PAPER} stroke={INK} strokeWidth="1.800" /><ellipse cx="12" cy="5" rx="11" ry="4" fill={PAPER} stroke={INK} strokeWidth="1.800" /></Svg>
      </button>
      <button aria-label="Build" className="flex h-[47px] items-center justify-center border border-t-0 border-[#605e5c] bg-[#e1dfdd]">
        <Svg>{bars}<path d="M14 14v10c0 4 13 4 13 0V14" fill={PAPER} stroke="#e07000" strokeWidth="1.800" /><ellipse cx="20.500" cy="14" rx="6.500" ry="2.500" fill={PAPER} stroke="#e07000" strokeWidth="1.800" /></Svg>
      </button>
      <button aria-label="Format" className="flex h-12 items-center justify-center"><Svg>{bars}<path d="M27 8L16 21l-3-2z" fill={PAPER} stroke={INK} strokeWidth="1.600" /><path d="M5 27c3 0 4-6 7-7l4 3c0 4-7 6-11 4z" fill={BLUE} stroke={BLUE_EDGE} strokeWidth="1.600" /></Svg></button>
      <button aria-label="Add pane" className="flex h-12 items-center justify-center"><Svg s={26} vb="0 0 26 26"><path d="M13 0v26M0 13h26" stroke="#000" strokeWidth="1.800" /></Svg></button>
      <button aria-label="Pane settings" className="mt-auto flex h-12 items-center justify-center border-t border-[#d2d0ce]">
        <Svg s={30} vb="0 0 30 30"><path d="M12 1.500h6l1 4 3.500 2 4-1.500 3 5-3 3v2.500l3 3-3 5-4-1.500-3.500 2-1 3.500h-6l-1-3.500-3.500-2-4 1.500-3-5 3-3V14l-3-3 3-5 4 1.500 3.500-2z" stroke={INK} strokeWidth="1.800" strokeLinejoin="round" /><circle cx="15" cy="15.200" r="5" stroke={INK} strokeWidth="1.800" /></Svg>
      </button>
    </nav>
  );
}

function StatusBar() {
  return (
    <footer className="flex h-[38px] shrink-0 items-center border-t border-b-2 border-t-[#e1dfdd] border-b-[#bdbdbd] bg-[#f3f2f1] text-[17px] text-[#605e5c] shadow-[inset_0_-1px_0_#000]">
      <span className="ml-1.5">Page 5 of 8</span>
      <button aria-label="Zoom out" className="ml-auto w-3 text-[19px] font-semibold">-</button>
      <div className="relative mx-1 flex h-5 w-[150px] items-center">
        <input type="range" aria-label="Zoom" min="0" max="100" defaultValue="28" className="h-0.5 w-full appearance-none bg-[#605e5c] [&::-webkit-slider-thumb]:h-4 [&::-webkit-slider-thumb]:w-1.5 [&::-webkit-slider-thumb]:appearance-none [&::-webkit-slider-thumb]:bg-[#605e5c]" />
        <span className="absolute top-1.5 left-1/2 h-2 w-0.5 bg-[#605e5c]" />
      </div>
      <button aria-label="Zoom in" className="mx-1 w-4 text-[19px] font-semibold">+</button>
      <span className="ml-3 w-16">62%</span>
      <button aria-label="Fit to page" className="mr-[27px]"><Svg w={24} h={18} vb="0 0 24 18"><rect x="1" y="1" width="22" height="16" stroke="#605e5c" strokeWidth="1.800" /><path d="M5 7V5h3M16 5h3v2M19 11v2h-3M8 13H5v-2" stroke="#605e5c" strokeWidth="1.500" /></Svg></button>
    </footer>
  );
}

/* ---------- taskbar ---------- */

const Spark = ({ x, y, a, b, n = 12, r = 10 }) => (
  <g transform={"translate(" + x + " " + y + ")"} strokeWidth="1.300">
    {Array.from({ length: n }, (_, i) => (
      <path key={i} d={"M0 " + (-3 - (i % 2)) + "V" + -(r + (i % 2) * 2)} stroke={i % 2 ? a : b} transform={"rotate(" + (i * 360) / n + ")"} />
    ))}
  </g>
);

const APPS = [
  ["Task view", 0, <><rect x="0" y="9" width="27" height="25" rx="2" fill="#2b2b2b" /><rect x="9" y="0" width="27" height="25" rx="2" fill="#fff" opacity=".75" /><rect x="9" y="9" width="18" height="16" fill="#a8a8a8" opacity=".7" /></>],
  ["Microsoft Store", 0, <><path d="M9 6V2h18v4" stroke="#1db4f0" strokeWidth="2.500" /><rect x="1" y="5" width="34" height="31" rx="3" fill="#1a4f8f" /><rect x="10" y="12" width="7.500" height="7.500" fill="#f25022" /><rect x="18.500" y="12" width="7.500" height="7.500" fill="#7fba00" /><rect x="10" y="20.500" width="7.500" height="7.500" fill="#00a4ef" /><rect x="18.500" y="20.500" width="7.500" height="7.500" fill="#ffb900" /></>],
  ["Copilot", 0, <><path d="M10 3C12 1 20 0 24 2l3 8h-5c-4 0-5 2-6 6l-3 10c-1 3-3 4-6 3-6-1-7-6-6-10z" fill="url(#cpA)" /><path d="M26 32c-2 2-10 3-14 1l-3-5h5c4 0 6-3 7-7l3-9c1-3 3-3 5-3 6 1 7 6 6 10z" fill="url(#cpB)" /></>],
  ["File Explorer", 1, <><path d="M0 4c0-1 1-2 2-2h10l4 5H0z" fill="#e09c00" /><rect x="0" y="6" width="36" height="28" rx="2" fill="#fcc63d" /><path d="M6 34v-9c0-1 1-2 2-2h20c1 0 2 1 2 2v9z" fill="#1380d8" /><path d="M11 28h14" stroke="#0a4f90" strokeWidth="2" /></>],
  ["Edge", 0, <><circle cx="18" cy="18" r="18" fill="#1a8fd8" /><path d="M2 10C8-3 32-4 36 16c0 8-8 10-13 8 3-5 0-12-8-12C8 12 4 14 0 20c0-4 0-7 2-10z" fill="url(#edg)" /><path d="M14 20c0 9 8 13 19 8-5 9-18 11-25 4-5-6-2-12 6-12z" fill="#114e92" /><path d="M16 17c4-5 9 2 7 6 4 2 9 1 11-1-3 7-18 7-18-5z" fill="#eee" /><circle cx="9" cy="28" r="8" fill="#b5b2ae" /><circle cx="9" cy="25" r="3.500" fill="#6b6865" /><path d="M3 33c1-5 11-5 12 0-3 4-9 4-12 0z" fill="#6b6865" /></>],
  ["Acrobat", 1, <><rect x="1" y="1" width="33" height="32" rx="5" fill="#b30b00" /><path d="M9 25c6-3 9-10 8-16-2 0-1 6 3 10s9 3 7 1-12 0-16 3-3 4-2 2z" stroke="#fff" strokeWidth="1.800" /></>],
  ["Chrome", 1, <><circle cx="18" cy="18" r="18" fill="#34a853" /><path d="M2.400 9A18 18 0 0 1 33.600 9H18a9 9 0 0 0-7.800 4.500L6 15z" fill="#ea4335" /><path d="M33.600 9A18 18 0 0 1 18 36l7.800-13.500A9 9 0 0 0 25.800 13.500L18 9z" fill="#fbbc04" /><path d="M2.400 9l7.800 13.500L6 24z" fill="#34a853" /><circle cx="18" cy="18" r="9" fill="#fff" /><circle cx="18" cy="18" r="7" fill="#4285f4" /></>],
  ["Excel", 1, <><path d="M8 2h14v32H8z" fill="#21a366" /><path d="M22 2h12c1 0 2 1 2 2v6H22z" fill="#33c481" /><path d="M8 10h14v8H8z" fill="#107c41" /><path d="M22 10h14v8H22z" fill="#21a366" /><path d="M22 18h14v8H22z" fill="#107c41" /><path d="M8 18h14v8h14v6c0 1-1 2-2 2H10c-1 0-2-1-2-2z" fill="#185c37" /><rect x="0" y="9" width="18" height="18" rx="2" fill="#107c41" /><path d="M5.500 13l7 10M12.500 13l-7 10" stroke="#fff" strokeWidth="2.400" /></>],
  ["Photos", 1, <><rect x="2" y="3" width="32" height="32" rx="4" fill="url(#pho)" /><path d="M3 34l13-19c1-1 3-1 4 0l13 18c-1 1-2 2-3 2H6z" fill="#1ca6e8" /><path d="M12 35l8-10 11 10z" fill="#5fe0ff" /><circle cx="26" cy="9" r="3" fill="#fff" /></>],
];

function Taskbar() {
  return (
    <footer className="flex h-[70px] shrink-0 items-center bg-[#eeeeee] pb-0.5 text-[17px] text-[#1b1b1b]">
      <svg width="0" height="0" className="absolute" aria-hidden="true">
        <defs>
          <linearGradient id="cpA" x1="0" y1="0" x2="0" y2="1"><stop offset="0" stopColor="#1570d8" /><stop offset=".5" stopColor="#20b8c8" /><stop offset="1" stopColor="#f0d020" /></linearGradient>
          <linearGradient id="cpB" x1="0" y1="0" x2="0" y2="1"><stop offset="0" stopColor="#8060e8" /><stop offset=".5" stopColor="#e050a0" /><stop offset="1" stopColor="#ff9040" /></linearGradient>
          <linearGradient id="edg" x1="0" y1="0" x2="1" y2="1"><stop offset="0" stopColor="#1fa0e0" /><stop offset="1" stopColor="#50e070" /></linearGradient>
          <linearGradient id="pho" x1="0" y1="0" x2="1" y2="1"><stop offset="0" stopColor="#1a80e0" /><stop offset="1" stopColor="#6040a0" /></linearGradient>
          <linearGradient id="win" x1="0" y1="0" x2="1" y2="1"><stop offset="0" stopColor="#4cc8ff" /><stop offset="1" stopColor="#0068c8" /></linearGradient>
          <linearGradient id="cld" x1="0" y1="0" x2="0" y2="1"><stop offset="0" stopColor="#6a95e8" /><stop offset="1" stopColor="#a9caf8" /></linearGradient>
          <linearGradient id="hat" x1="0" y1="0" x2="1" y2="0"><stop offset="0" stopColor="#e8383e" /><stop offset="1" stopColor="#b8141c" /></linearGradient>
        </defs>
      </svg>
      <button className="flex w-[443px] items-center pl-7 text-left">
        <Svg w={44} h={46} vb="0 0 44 46"><path d="M9 40C-2 40-2 26 8 25c2-12 20-12 22 0 10 2 9 15-1 15z" fill="url(#cld)" /><circle cx="29" cy="12" r="12" fill="#c42b1c" /><text x="29" y="17" textAnchor="middle" fontSize="14" fontFamily="Open Sans" fill="#fff">3</text></Svg>
        <span className="ml-1 leading-6">79°F<br /><span className="text-[#5c5c5c]">Cloudy</span></span>
      </button>
      <button aria-label="Start"><Svg s={36} vb="0 0 36 36"><path d="M0 2c0-1 1-2 2-2h15v17H0zM19 0h15c1 0 2 1 2 2v15H19zM0 19h17v17H2c-1 0-2-1-2-2zM19 19h17v15c0 1-1 2-2 2H19z" fill="url(#win)" /></Svg></button>
      <label className="mr-[18px] ml-[21px] flex h-[46px] w-[329px] items-center rounded-full border border-b-2 border-[#dcdcdc] border-b-[#c8c8c8] bg-[#fbfbfb] pr-1.5 pl-4">
        <Svg s={22} vb="0 0 22 22"><circle cx="10" cy="9" r="8" stroke="#1b1b1b" strokeWidth="2.200" /><path d="M15.500 15l6 6.500" stroke="#1b1b1b" strokeWidth="2.500" /></Svg>
        <input type="search" aria-label="Search the taskbar" placeholder="Search" className="ml-4 min-w-0 flex-1 bg-transparent text-[19px] outline-none placeholder:text-[#5f5f5f]" />
        <Svg w={68} h={32} vb="0 0 68 32"><Spark x={11} y={13} a="#e0604a" b="#3a80c0" /><Spark x={59} y={18} a="#e0604a" b="#7aa8d0" r={8} /><path d="M24 3c6-3 19-3 25 0l-4 23c-4 2-11 2-15 0z" fill="url(#hat)" /><path d="M30 4l4 18M37 4v18M43 4l-3 18" stroke="#fff" strokeWidth="2.200" /><path d="M28 18c5 3 13 3 18 0l-1 7c-5 2-11 2-16 0z" fill="#1e5aa0" /><path d="M32 22h1M36 23h1M40 22h1" stroke="#fff" strokeWidth="1.500" /><path d="M20 23c8 5 22 6 29-5 3 3 1 12-9 12-9 1-18-2-20-7z" fill="#d8262c" /></Svg>
      </label>
      {APPS.map(([name, on, art]) => (
        <button key={name} aria-label={name} className="relative mr-[30px] flex h-[68px] items-center">
          <Svg s={36} vb="0 0 36 36">{art}</Svg>
          {on ? <span className="absolute bottom-1 left-[14px] h-[5px] w-2 rounded-full bg-[#888]" /> : null}
        </button>
      ))}
      <button aria-label="Power BI" className="relative -ml-[10px] flex h-[58px] w-14 items-center justify-center rounded-md border border-[#e2e2e2] bg-[#f8f8f8]">
        <Svg s={36} vb="0 0 36 36"><rect width="36" height="36" fill="#0078d4" /><path d="M20 0h12v36H20z" fill="#e0a010" /><path d="M12 9h12v27H12z" fill="#f2c030" /><path d="M4 18h12v18H4z" fill="#f8dc70" /><path d="M24 18h8v18h-8z" fill="#c87c10" /></Svg>
        <span className="absolute bottom-0 left-4 h-1 w-6 rounded-full bg-[#0078d4]" />
      </button>
      <div className="ml-auto flex items-center">
        <button aria-label="Hidden icons" className="mr-7"><Svg w={16} h={10} vb="0 0 16 10"><path d="M1 9l7-7 7 7" stroke="#1b1b1b" strokeWidth="1.800" /></Svg></button>
        <button aria-label="OneDrive" className="mr-6"><Svg w={24} h={22} vb="0 0 24 22"><path d="M5 16C-1 16 0 8 5 8c1-8 12-8 14 0" fill="#a0a0a0" stroke="#333" strokeWidth="2" /><circle cx="16.500" cy="14" r="7.500" fill="#d13438" /><path d="M13.500 11l6 6M19.500 11l-6 6" stroke="#fff" strokeWidth="1.600" /></Svg></button>
        <button aria-label="Network" className="mr-3"><Svg w={24} h={20} vb="0 0 24 20"><path d="M1 7c6-7 16-7 22 0M5 11c4-5 10-5 14 0M8.500 14.500c2-3 5-3 7 0" stroke="#1b1b1b" strokeWidth="1.600" /><circle cx="12" cy="17.500" r="2" fill="#1b1b1b" /></Svg></button>
        <button aria-label="Volume" className="mr-3.5"><Svg w={24} h={20} vb="0 0 24 20"><path d="M1 7h4l6-5v16l-6-5H1zM14 7c2 2 2 4 0 6M17 4c4 3 4 9 0 12" stroke="#1b1b1b" strokeWidth="1.500" /><path d="M20 1c5 5 5 13 0 18" stroke="#aaa" strokeWidth="1.400" /></Svg></button>
        <button aria-label="Battery" className="mr-[26px]"><Svg w={24} h={16} vb="0 0 24 16"><rect x="1" y="1" width="19" height="14" rx="3" stroke="#1b1b1b" strokeWidth="1.600" /><rect x="4" y="4" width="12" height="8" rx="1" fill="#1b1b1b" /><path d="M22.500 5v6" stroke="#1b1b1b" strokeWidth="2" /></Svg></button>
        <div className="mr-7 text-right leading-6">2:51 PM<br />7/4/2025</div>
      </div>
    </footer>
  );
}

export default function App() {
  return (
    <div className="flex min-h-screen flex-col overflow-x-hidden bg-white [font-family:'Open_Sans','Noto_Sans',sans-serif]">
      <TitleBar />
      <Ribbon />
      <div className="flex flex-1">
        <LeftRail />
        <Canvas />
        <BuildPane />
        <DataPane />
        <RightRail />
      </div>
      <StatusBar />
      <Taskbar />
    </div>
  );
}
